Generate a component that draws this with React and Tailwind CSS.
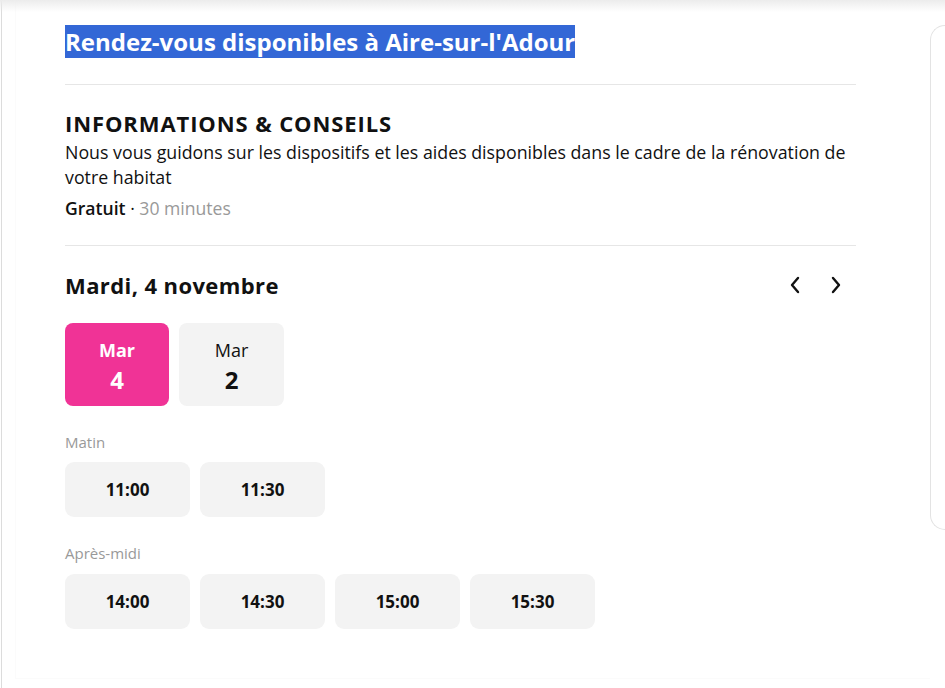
import React from "react";

function Chevron({ dir }) {
  return (
    <svg width="12" height="18" viewBox="0 0 12 18" fill="none">
      {dir === "left" ? (
        <path d="M9 2 L3 9 L9 16" stroke="#111" strokeWidth="2.4" strokeLinecap="round" strokeLinejoin="round" />
      ) : (
        <path d="M3 2 L9 9 L3 16" stroke="#111" strokeWidth="2.4" strokeLinecap="round" strokeLinejoin="round" />
      )}
    </svg>
  );
}

function TimeBtn({ t }) {
  return (
    <div className="w-[125px] h-[55px] rounded-[9px] bg-[#f3f3f3] flex items-center justify-center text-[17px] font-bold text-[#111]">
      {t}
    </div>
  );
}

export default function App() {
  return (
    <div
      className="w-[945px] h-[688px] bg-white flex overflow-hidden relative text-[#111]"
      style={{ fontFamily: '"Open Sans", "Noto Sans", sans-serif' }}
    >
      <div className="absolute inset-x-0 top-0 h-[12px] bg-gradient-to-b from-[#ececec] to-transparent pointer-events-none" />
      <div className="ml-[1px] border-l border-[#dcdcdc] h-full w-[929px] pl-[13px] shrink-0">
        <div className="border-l border-b border-[#fbfbfb] h-[679px] pl-[49px] pt-[25px]">
          <div className="w-[791px]">
            <h1 className="text-[24px] font-bold leading-[33px]">
              <span className="bg-[#3367d6] text-white">Rendez-vous disponibles à Aire-sur-l'Adour</span>
            </h1>
            <div className="mt-[26px] border-t border-[#e6e6e6]" />
            <div className="pt-[24px]">
              <div className="text-[22px] font-bold leading-[28px] tracking-[0.9px]">INFORMATIONS &amp; CONSEILS</div>
              <p className="text-[17.8px] leading-[25px] mt-[3px]">
                Nous vous guidons sur les dispositifs et les aides disponibles dans le cadre de la rénovation de votre habitat
              </p>
              <div className="text-[17.6px] leading-[25px] mt-[6px]">
                <span className="font-semibold">Gratuit</span>
                <span> · </span>
                <span className="text-[#999]">30 minutes</span>
              </div>
            </div>
            <div className="mt-[24px] border-t border-[#e6e6e6]" />
            <div className="mt-[25px] flex items-center justify-between">
              <div className="text-[22px] font-bold leading-[28px] tracking-[0.4px]">Mardi, 4 novembre</div>
              <div className="flex items-center gap-[29px] pr-[14px]">
                <Chevron dir="left" />
                <Chevron dir="right" />
              </div>
            </div>
            <div className="mt-[24px] flex gap-[10px]">
              <div className="w-[104px] h-[83px] rounded-[8px] bg-[#f03396] text-white flex flex-col items-center justify-center pt-[4px]">
                <div className="text-[18px] font-bold leading-[22px]">Mar</div>
                <div className="text-[24px] font-bold leading-[30px] mt-[4px]">4</div>
              </div>
              <div className="w-[105px] h-[83px] rounded-[8px] bg-[#f3f3f3] flex flex-col items-center justify-center pt-[4px]">
                <div className="text-[18px] font-medium leading-[22px]">Mar</div>
                <div className="text-[24px] font-bold leading-[30px] mt-[4px]">2</div>
              </div>
            </div>
            <div className="mt-[26px] text-[15px] leading-[20px] text-[#999]">Matin</div>
            <div className="mt-[10px] flex gap-[10px]">
              <TimeBtn t="11:00" />
              <TimeBtn t="11:30" />
            </div>
            <div className="mt-[26px] text-[15px] leading-[20px] text-[#999]">Après-midi</div>
            <div className="mt-[11px] flex gap-[10px]">
              <TimeBtn t="14:00" />
              <TimeBtn t="14:30" />
              <TimeBtn t="15:00" />
              <TimeBtn t="15:30" />
            </div>
          </div>
        </div>
      </div>
      <div className="mt-[25px] h-[505px] flex-1 border border-r-0 border-[#e3e3e3] rounded-l-[16px]" />
    </div>
  );
}
